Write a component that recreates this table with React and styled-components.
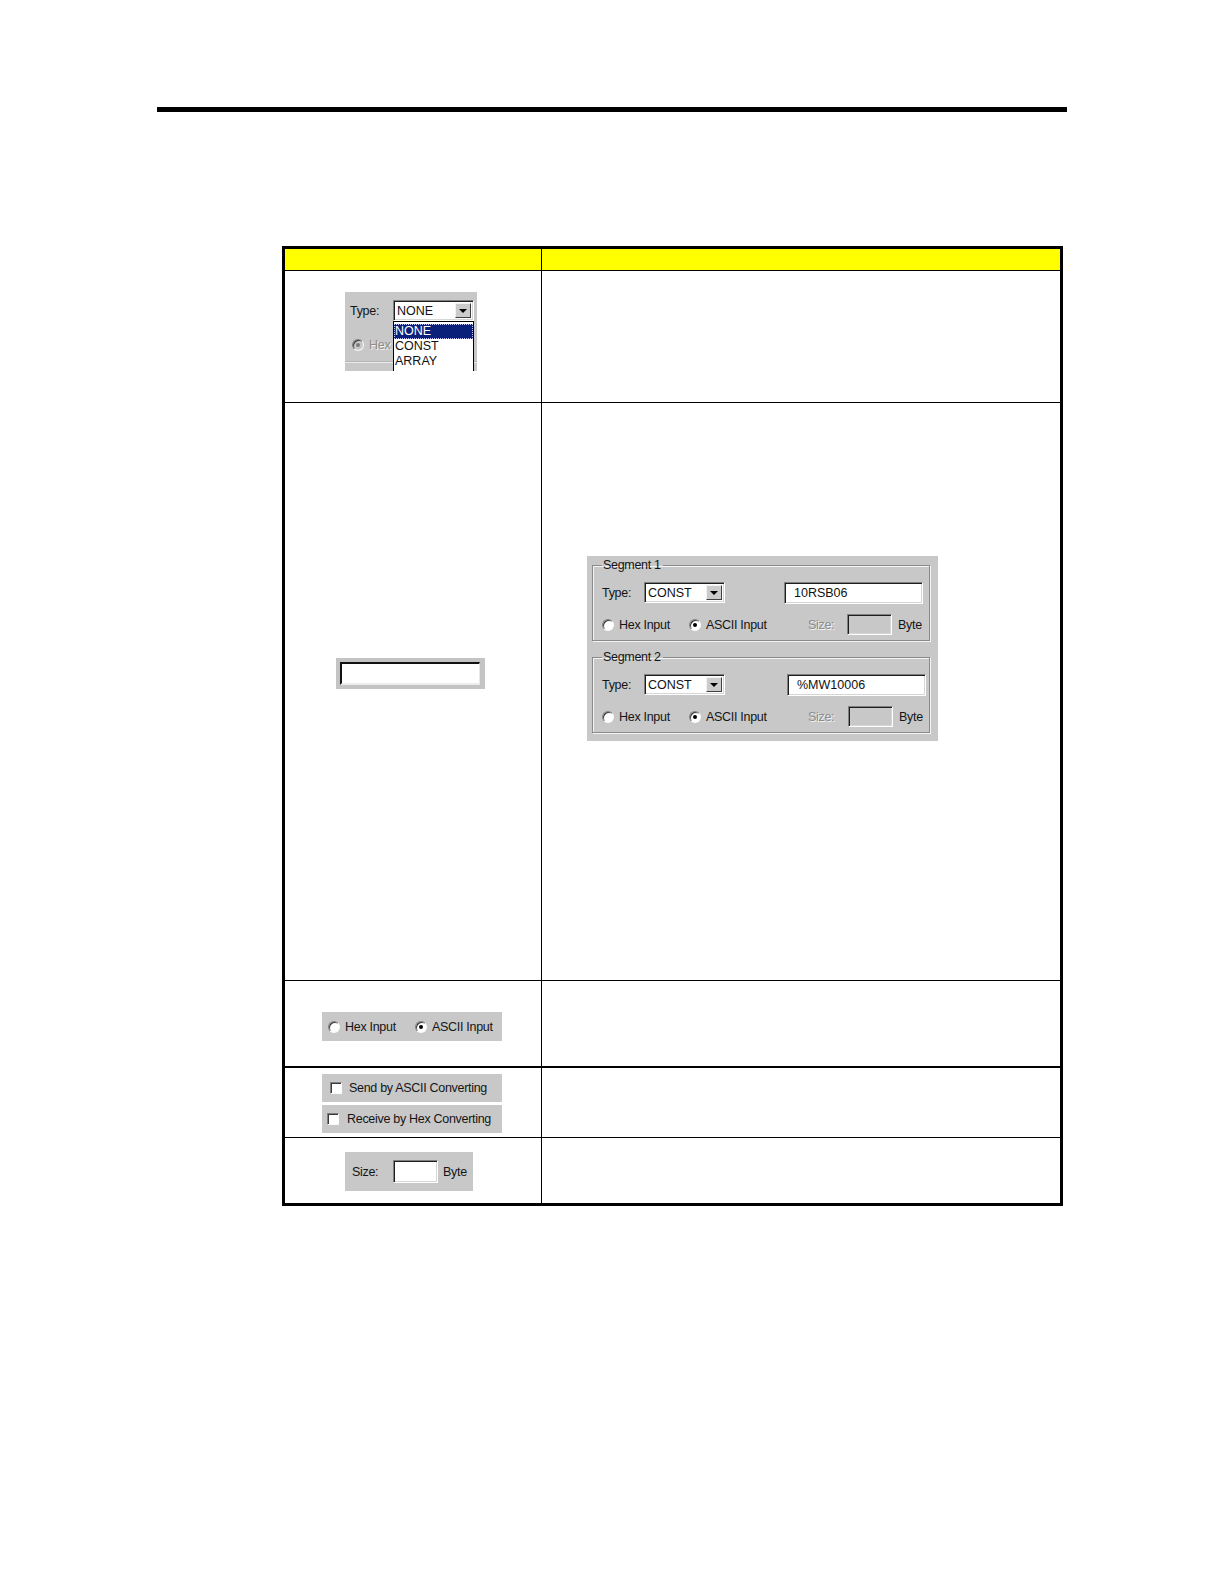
import React from "react"
import styled, { createGlobalStyle } from "styled-components"

const GlobalStyle = createGlobalStyle`
  body {
    margin: 0;
    background: #fff;
    font-family: "Liberation Sans", Arial, sans-serif;
  }
`

const Page = styled.div`
  width: 1224px;
  min-height: 1584px;
  padding-top: 107px;
  box-sizing: border-box;
`

const TopRule = styled.div`
  margin-left: 157px;
  width: 910px;
  height: 5px;
  background: #000;
`

const Table = styled.div`
  margin: 134px 0 0 282px;
  width: 781px;
  border: 3px solid #000;
  box-sizing: border-box;
`

const Row = styled.div`
  display: grid;
  grid-template-columns: 256px 519px;
  height: ${p => p.$h}px;
  box-sizing: border-box;
  border-bottom: ${p => p.$line || 0}px solid #000;
  background: ${p => (p.$head ? "#ffff00" : "#fff")};
`

const Cell = styled.div`
  box-sizing: border-box;
  padding: ${p => p.$pad || "0"};
  border-left: ${p => (p.$right ? "1px solid #000" : "none")};
`

/* ---- windows classic bits ---- */

const Label = styled.span`
  font-size: 12.5px;
  letter-spacing: -0.3px;
  color: ${p => (p.$disabled ? "#8c8c8c" : "#151515")};
  text-shadow: ${p => (p.$disabled ? "1px 1px 0 #f4f4f4" : "none")};
  width: ${p => (p.$w ? p.$w + "px" : "auto")};
  margin-left: ${p => p.$ml || 0}px;
  flex-shrink: 0;
  white-space: nowrap;
`

const Inset = styled.div`
  box-sizing: border-box;
  width: ${p => p.$w}px;
  height: ${p => p.$h}px;
  margin-left: ${p => p.$ml || 0}px;
  background: ${p => (p.$disabled ? "#c8c8c8" : "#fff")};
  border: 1px solid;
  border-color: #808080 #fff #fff #808080;
  box-shadow: inset 1px 1px 0 #1e1e1e, inset -1px -1px 0 #d6d6d6;
  display: flex;
  align-items: center;
  padding-left: 9px;
  font-size: 12.5px;
  color: #111;
  flex-shrink: 0;
`

const SelectBox = styled(Inset)`
  padding: 0 2px 0 3px;
  justify-content: space-between;
`

const ArrowButton = styled.div`
  width: 16px;
  height: 15px;
  box-sizing: border-box;
  background: #cbcbcb;
  border: 1px solid;
  border-color: #f2f2f2 #404040 #404040 #f2f2f2;
  display: flex;
  align-items: center;
  justify-content: center;
  &::after {
    content: "";
    border-left: 4px solid transparent;
    border-right: 4px solid transparent;
    border-top: 4px solid #000;
  }
`

const RadioItem = styled.div`
  display: flex;
  align-items: center;
  gap: 5px;
  width: ${p => (p.$w ? p.$w + "px" : "auto")};
  flex-shrink: 0;
`

const RadioDot = styled.span`
  width: 12px;
  height: 12px;
  box-sizing: border-box;
  border-radius: 50%;
  border: 1px solid;
  border-color: #808080 #fafafa #fafafa #808080;
  box-shadow: inset 1px 1px 0 #3a3a3a;
  background: ${p => (p.$disabled ? "#c8c8c8" : "#fff")};
  display: flex;
  align-items: center;
  justify-content: center;
  &::after {
    content: "";
    width: 4px;
    height: 4px;
    border-radius: 50%;
    background: ${p => (p.$disabled ? "#7a7a7a" : "#000")};
    display: ${p => (p.$checked ? "block" : "none")};
  }
`

const CheckBox = styled.span`
  width: 12px;
  height: 12px;
  box-sizing: border-box;
  border: 1px solid;
  border-color: #808080 #fafafa #fafafa #808080;
  box-shadow: inset 1px 1px 0 #3a3a3a;
  background: #fff;
  flex-shrink: 0;
`

function Radio({ label, checked, w, disabled }) {
  return (
    <RadioItem $w={w}>
      <RadioDot $checked={checked} $disabled={disabled} />
      <Label $disabled={disabled}>{label}</Label>
    </RadioItem>
  )
}

function Select({ value, w = 81 }) {
  return (
    <SelectBox $w={w} $h={21}>
      <span>{value}</span>
      <ArrowButton />
    </SelectBox>
  )
}

/* ---- row 1: type drop-down ---- */

const TypeDemo = styled.div`
  position: relative;
  width: 132px;
  height: 79px;
  background: #c8c8c8;
  display: flex;
  flex-direction: column;
  overflow: hidden;
`

const DemoRow = styled.div`
  display: flex;
  align-items: center;
  padding: ${p => p.$pad};
`

const Separator = styled.div`
  margin-top: auto;
  margin-bottom: 8px;
  height: 1px;
  background: #ececec;
  border-top: 1px solid #b4b4b4;
`

const DropList = styled.div`
  position: absolute;
  left: 48px;
  top: 29px;
  width: 81px;
  height: 52px;
  box-sizing: border-box;
  background: #fff;
  border: 1px solid #000;
  padding-top: 2px;
`

const DropItem = styled.div`
  height: 15px;
  line-height: 15px;
  box-sizing: border-box;
  padding-left: 1px;
  font-size: 12.5px;
  color: ${p => (p.$active ? "#fff" : "#111")};
  background: ${p => (p.$active ? "#0a1f7a" : "transparent")};
  outline: ${p => (p.$active ? "1px dotted #c8c8ff" : "none")};
  outline-offset: -1px;
`

/* ---- row 2: field + segment panel ---- */

const FieldFrame = styled.div`
  width: 149px;
  height: 31px;
  box-sizing: border-box;
  padding: 4px 5px 4px 4px;
  background: #c4c4c4;
`

const BlankField = styled.div`
  height: 100%;
  box-sizing: border-box;
  background: #fff;
  border-top: 2px solid #111;
  border-left: 2px solid #111;
  border-right: 1px solid #e8e8e8;
  border-bottom: 2px solid #ececec;
`

const SegmentPanel = styled.div`
  width: 351px;
  height: 185px;
  box-sizing: border-box;
  padding: 2px 8px 0 5px;
  background: #c8c8c8;
`

const Group = styled.fieldset`
  margin: ${p => (p.$first ? 0 : 9)}px 0 0 0;
  padding: 10px 0 5px 9px;
  border: 1px solid #8a8a8a;
  box-shadow: inset 1px 1px 0 #f4f4f4, 1px 1px 0 #f4f4f4;
  min-inline-size: 0;
`

const Legend = styled.legend`
  padding: 0 2px 0 1px;
  font-size: 12.5px;
  letter-spacing: -0.3px;
  line-height: 14px;
  color: #151515;
`

const GroupRow = styled.div`
  display: flex;
  align-items: center;
  height: 21px;
  margin-top: ${p => p.$mt || 0}px;
`

function Segment({ n, value, gap, sizeShift, first }) {
  return (
    <Group $first={first}>
      <Legend>Segment {n}</Legend>
      <GroupRow>
        <Label $w={42}>Type:</Label>
        <Select value="CONST" />
        <Inset $w={139} $h={22} $ml={gap}>
          {value}
        </Inset>
      </GroupRow>
      <GroupRow $mt={11}>
        <Radio w={87} label="Hex Input" />
        <Radio w={119} label="ASCII Input" checked />
        <Label $w={39 + sizeShift} $disabled>
          Size:
        </Label>
        <Inset $w={45} $h={21} $disabled />
        <Label $ml={6}>Byte</Label>
      </GroupRow>
    </Group>
  )
}

/* ---- rows 3-5 ---- */

const Strip = styled.div`
  display: flex;
  align-items: center;
  gap: ${p => p.$gap || 0}px;
  width: ${p => p.$w}px;
  height: ${p => p.$h}px;
  box-sizing: border-box;
  padding-left: ${p => p.$pl}px;
  background: #c8c8c8;
`

const StripStack = styled.div`
  display: flex;
  flex-direction: column;
  gap: 3px;
`

export default function App() {
  return (
    <>
      <GlobalStyle />
      <Page>
        <TopRule />
        <Table>
          <Row $h={22} $line={1} $head>
            <Cell />
            <Cell $right />
          </Row>

          <Row $h={132} $line={1}>
            <Cell $pad="21px 0 0 60px">
              <TypeDemo>
                <DemoRow $pad="8px 0 0 5px">
                  <Label $w={43}>Type:</Label>
                  <Select value="NONE" />
                </DemoRow>
                <DemoRow $pad="17px 0 0 7px">
                  <Radio label="Hex" disabled checked />
                </DemoRow>
                <Separator />
                <DropList>
                  <DropItem $active>NONE</DropItem>
                  <DropItem>CONST</DropItem>
                  <DropItem>ARRAY</DropItem>
                </DropList>
              </TypeDemo>
            </Cell>
            <Cell $right />
          </Row>

          <Row $h={578} $line={1}>
            <Cell $pad="255px 0 0 51px">
              <FieldFrame>
                <BlankField />
              </FieldFrame>
            </Cell>
            <Cell $right $pad="153px 0 0 45px">
              <SegmentPanel>
                <Segment n={1} value="10RSB06" gap={59} sizeShift={0} first />
                <Segment n={2} value="%MW10006" gap={62} sizeShift={1} />
              </SegmentPanel>
            </Cell>
          </Row>

          <Row $h={87} $line={2}>
            <Cell $pad="31px 0 0 37px">
              <Strip $w={180} $h={29} $pl={6}>
                <Radio w={87} label="Hex Input" />
                <Radio label="ASCII Input" checked />
              </Strip>
            </Cell>
            <Cell $right />
          </Row>

          <Row $h={70} $line={1}>
            <Cell $pad="6px 0 0 37px">
              <StripStack>
                <Strip $w={180} $h={28} $pl={8} $gap={7}>
                  <CheckBox />
                  <Label>Send by ASCII Converting</Label>
                </Strip>
                <Strip $w={180} $h={28} $pl={5} $gap={8}>
                  <CheckBox />
                  <Label>Receive by Hex Converting</Label>
                </Strip>
              </StripStack>
            </Cell>
            <Cell $right />
          </Row>

          <Row $h={65}>
            <Cell $pad="14px 0 0 60px">
              <Strip $w={128} $h={39} $pl={7}>
                <Label $w={41}>Size:</Label>
                <Inset $w={45} $h={23} />
                <Label $ml={5}>Byte</Label>
              </Strip>
            </Cell>
            <Cell $right />
          </Row>
        </Table>
      </Page>
    </>
  )
}
